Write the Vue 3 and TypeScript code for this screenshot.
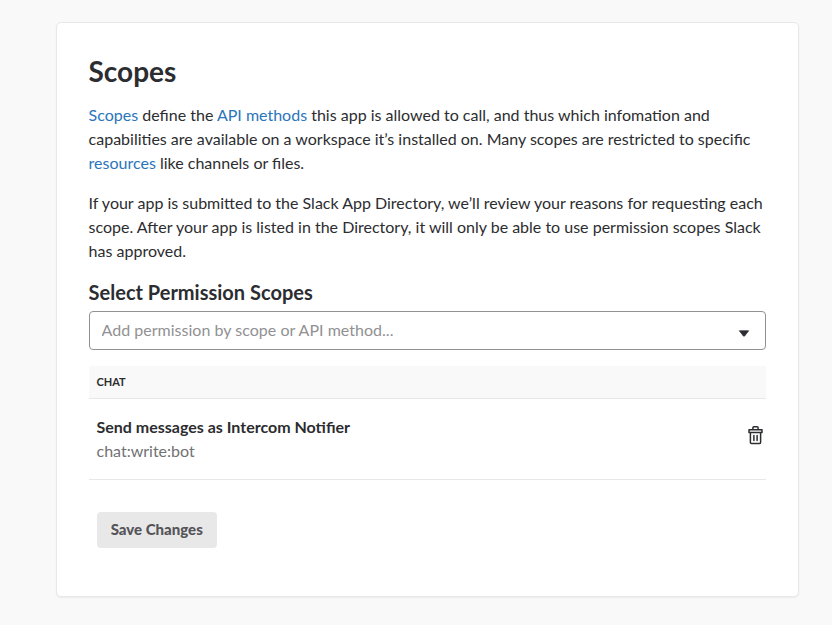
<script setup lang="ts">
import { ref } from 'vue'

interface Scope {
  title: string
  name: string
}

const query = ref('')
const scopes = ref<Scope[]>([
  { title: 'Send messages as Intercom Notifier', name: 'chat:write:bot' },
])

function removeScope(index: number) {
  scopes.value.splice(index, 1)
}
</script>

<template>
  <main class="page">
    <section class="card">
      <h1>Scopes</h1>
      <p>
        <a href="#">Scopes</a> define the <a href="#">API methods</a> this app is allowed to call, and thus which infomation and<br />
        capabilities are available on a workspace it’s installed on. Many scopes are restricted to specific<br />
        <a href="#">resources</a> like channels or files.
      </p>
      <p>
        If your app is submitted to the Slack App Directory, we’ll review your reasons for requesting each<br />
        scope. After your app is listed in the Directory, it will only be able to use permission scopes Slack<br />
        has approved.
      </p>
      <h2>Select Permission Scopes</h2>
      <div class="picker">
        <input v-model="query" type="text" placeholder="Add permission by scope or API method..." />
        <svg class="caret" width="12" height="7" viewBox="0 0 12 7">
          <path d="M1.4 .8h9.2L6.6 6Q6 6.6 5.4 6z" fill="#2c2d30" stroke="#2c2d30" stroke-width=".8" stroke-linejoin="round" />
        </svg>
      </div>
      <div class="group">CHAT</div>
      <div v-for="(scope, i) in scopes" :key="scope.name" class="row">
        <div class="label">
          <div class="title">{{ scope.title }}</div>
          <div class="name">{{ scope.name }}</div>
        </div>
        <button class="trash" type="button" @click="removeScope(i)">
          <svg width="16" height="20" viewBox="0 0 16 20" fill="none" stroke="#2c2d30" stroke-width="1.5" stroke-linejoin="round" stroke-linecap="round">
            <path d="M4.9 4.3V2.7q0-1 1-1h3.2q1 0 1 1v1.6M1 4.7h13v2.8H1zM2.4 7.5v10q0 1 1 1h8.2q1 0 1-1v-10M5.9 10.6v4.8M9.1 10.6v4.8" />
          </svg>
        </button>
      </div>
      <button class="save" type="button">Save Changes</button>
    </section>
  </main>
</template>

<style>
body {
  background: #f9f9f9;
}
</style>

<style scoped>
.page {
  box-sizing: border-box;
  height: 625px;
  padding: 22px 33px 28px 56px;
  font-family: Lato, sans-serif;
  font-size: 16px;
  line-height: 24px;
  color: #2c2d30;
}
.card {
  box-sizing: border-box;
  height: 575px;
  padding: 31px 32px 0;
  background: #fff;
  border: 1px solid #e8e8e8;
  border-radius: 5px;
  box-shadow: 0 1px 2px rgba(0, 0, 0, 0.06);
}
h1 {
  margin: 0 0 15px -0.5px;
  font-size: 28px;
  line-height: 34px;
  font-weight: 700;
}
p {
  margin: 0 0 16px -0.4px;
  white-space: nowrap;
}
a {
  color: #2a75bb;
  text-decoration: none;
}
h2 {
  margin: 0 0 6px -0.4px;
  font-size: 20px;
  line-height: 26px;
  font-weight: 700;
}
.picker {
  box-sizing: border-box;
  display: flex;
  align-items: center;
  width: 677px;
  height: 39px;
  padding: 0 15px 0 11.5px;
  border: 1px solid #919193;
  border-radius: 4px;
}
.picker input {
  flex: 1;
  height: 24px;
  margin-bottom: 1px;
  padding: 0;
  border: 0;
  outline: 0;
  background: transparent;
  font: inherit;
  letter-spacing: 0.02px;
  color: inherit;
}
.picker input::placeholder {
  color: #919193;
  opacity: 1;
}
.caret {
  margin-top: 6px;
}
.group {
  box-sizing: border-box;
  width: 677px;
  height: 33px;
  margin-top: 16px;
  padding: 0 7.5px;
  background: #f9f9f9;
  border-bottom: 1px solid #e8e8e8;
  font-size: 11px;
  line-height: 32px;
  font-weight: 700;
}
.row {
  box-sizing: border-box;
  display: flex;
  justify-content: space-between;
  width: 677px;
  height: 81px;
  padding: 16px 2px 0 7.5px;
  border-bottom: 1px solid #e8e8e8;
}
.title {
  font-weight: 700;
}
.name {
  color: #717274;
}
.trash {
  display: block;
  height: 20px;
  margin-top: 10px;
  padding: 0;
  border: 0;
  background: none;
}
.trash svg {
  display: block;
}
.save {
  display: block;
  width: 120px;
  height: 36px;
  margin: 32px 0 0 8px;
  padding: 0 0.5px 2px 0;
  border: 0;
  border-radius: 4px;
  background: #e8e8e8;
  font: 900 15px/34px Lato, sans-serif;
  color: #555459;
}
</style>
